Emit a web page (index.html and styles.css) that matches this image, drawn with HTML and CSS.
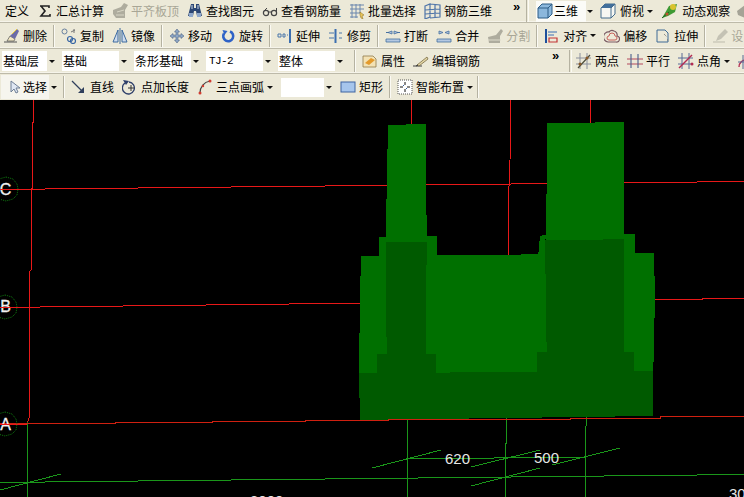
FILE: index.html
```html
<!DOCTYPE html>
<html lang="zh">
<head>
<meta charset="utf-8">
<title>三维</title>
<link rel="stylesheet" href="styles.css">
</head>
<body>
<div class="app">
  <div class="row row1">
    <div class="tool"><span>定义</span></div>
    <div class="tool"><svg class="ic" viewBox="0 0 16 16"><path d="M3 3h9v2M4 3l4 5-4 5h9v-2" fill="none" stroke="#222" stroke-width="1.6"/></svg><span>汇总计算</span></div>
    <div class="tool off"><svg class="ic" viewBox="0 0 16 16"><path d="M1 7l8-3 3-4 4 2-3 5v8H4l-3-4z" fill="#aeac9e"/><path d="M5 9l7-2M4 12h8" stroke="#d8d6c6"/></svg><span>平齐板顶</span></div>
    <div class="tool"><svg class="ic" viewBox="0 0 16 16"><path d="M4 1h3v4h2V1h3l3 12h-5l-1-5H7l-1 5H1z" fill="#2c4673"/><path d="M2 10h4v4H2zM10 10h4v4h-4z" fill="#8fa8cc"/><path d="M5 2v4M11 2v4" stroke="#c9d6ea"/></svg><span>查找图元</span></div>
    <div class="tool"><svg class="ic" viewBox="0 0 16 16"><circle cx="4" cy="10" r="2.6" fill="none" stroke="#444" stroke-width="1.2"/><circle cx="12" cy="10" r="2.6" fill="none" stroke="#444" stroke-width="1.2"/><path d="M6.500 9h3M2 8l3-3M14.500 9V5" fill="none" stroke="#444"/></svg><span>查看钢筋量</span></div>
    <div class="tool"><svg class="ic" viewBox="0 0 16 16"><path d="M1 2h14M1 6h14M1 10h10M1 14h8M3 1v14M7 1v14M11 1v9" stroke="#6a86ad" fill="none"/><path d="M11 9l4 3-2 1 1 3-2-1-1-3z" fill="#e8c45a" stroke="#8b6d1c" stroke-width=".5"/></svg><span>批量选择</span></div>
    <div class="tool wide"><svg class="ic" viewBox="0 0 17 16"><path d="M1 3l5-2v13l-5 2zM1 7l15-1M1 11l15-1M6 1l10 1v12l-10 1M11 2v12M16 2v12" fill="none" stroke="#4f75a8" stroke-width="1.200"/></svg><span>钢筋三维</span></div>
    <div class="chev top1">»</div>
    <div class="sep dbl"></div>
    <div class="view">
      <div class="viewbox"><svg class="ic" viewBox="0 0 16 16"><path d="M1 5l4-4h10v10l-4 4H1z" fill="#8bb7dc" stroke="#2c5d86"/><path d="M1 5h10v10M11 5l4-4" fill="none" stroke="#2c5d86"/></svg><span>三维</span></div>
      <i class="arr"></i>
    </div>
    <div class="tool arrowed wide2"><svg class="ic" viewBox="0 0 18 16"><path d="M2 5l4-4h10v10l-4 4H2z" fill="#f7f7f2" stroke="#456c8d"/><path d="M2 5l4-4h10l-4 4z" fill="#426f9b"/><path d="M12 5v10M12 5l4-4" stroke="#456c8d"/></svg><span>俯视</span><i class="arr"></i></div>
    <div class="tool wide3"><svg class="ic" viewBox="0 0 18 16"><path d="M1 15l3-5 4-7 8-2-2 8-7 4z" fill="#3e9a33"/><circle cx="12" cy="4" r="3" fill="#d9c32f"/><path d="M1 15l7-6" stroke="#1c5c20"/><circle cx="6" cy="11" r="1.500" fill="#c14f2e"/></svg><span>动态观察</span></div>
    <div class="tool off last"><svg class="ic" viewBox="0 0 16 16"><path d="M1 8l8-6 6 3-6 10-7-3z" fill="#a5a396"/></svg></div>
  </div>

  <div class="row row2">
    <div class="tool"><svg class="ic" viewBox="0 0 16 16"><path d="M0 14h13" stroke="#555"/><path d="M3 13l3-5 5 3-1 2z" fill="#f2e7c2" stroke="#555" stroke-width=".7"/><path d="M6 8l7-7 2 2-4 8z" fill="#6c6ca8"/><path d="M8 6l5-5" stroke="#e7c93c"/></svg><span>删除</span></div>
    <div class="sep"></div>
    <div class="tool"><svg class="ic" viewBox="0 0 16 16"><circle cx="3.500" cy="3.500" r="2.500" fill="none" stroke="#68809f"/><circle cx="9" cy="11" r="2.500" fill="none" stroke="#3765a4" stroke-width="1.200"/><circle cx="12" cy="13" r="2.500" fill="none" stroke="#3765a4" stroke-width="1.200"/><path d="M10 4l4-2M13 1v4" stroke="#777" fill="none"/></svg><span>复制</span></div>
    <div class="tool"><svg class="ic" viewBox="0 0 16 16"><path d="M6 2v12H1z" fill="#cfdced" stroke="#3d6a9e"/><path d="M10 2v12h5z" fill="#cfdced" stroke="#3d6a9e"/><path d="M8 0v16" stroke="#3d6a9e"/></svg><span>镜像</span></div>
    <div class="sep"></div>
    <div class="tool"><svg class="ic" viewBox="0 0 16 16"><path d="M8 1l2.500 3H9v3h3V5.500L15 8l-3 2.500V9H9v3h1.500L8 15l-2.500-3H7V9H4v1.500L1 8l3-2.500V7h3V4H5.500z" fill="#8ea6c4" stroke="#3c5578" stroke-width=".5"/></svg><span>移动</span></div>
    <div class="tool"><svg class="ic" viewBox="0 0 16 16"><path d="M10 3.500A5 5 0 1 1 4 5.500" fill="none" stroke="#2e62c7" stroke-width="2.600"/><path d="M2.500 2l5 1-3 4z" fill="#2e62c7"/></svg><span>旋转</span></div>
    <div class="sep"></div>
    <div class="tool"><svg class="ic" viewBox="0 0 16 16"><path d="M1 6h3v3H1zM6 6h2v3H6zM10 7h1" fill="none" stroke="#4a77aa"/><path d="M13 1v14" stroke="#3d6fb0" stroke-width="2"/></svg><span>延伸</span></div>
    <div class="tool"><svg class="ic" viewBox="0 0 16 16"><path d="M1 5h5M1 10h5M11 5h3M11 10h3" stroke="#4a77aa"/><path d="M7.500 1v14" stroke="#3d6fb0" stroke-width="2"/></svg><span>修剪</span></div>
    <div class="sep"></div>
    <div class="tool"><svg class="ic" viewBox="0 0 16 16"><path d="M1 11h14v3H1zM7 3l-4 1.500L7 6zM9 3l4 1.500L9 6z" fill="#b4c8e2" stroke="#456f9f" stroke-width=".8"/><path d="M1 4.500h3M12 4.500h3" stroke="#456f9f"/></svg><span>打断</span></div>
    <div class="tool"><svg class="ic" viewBox="0 0 16 16"><path d="M1 11h14v3H1zM3 3l4 1.500L3 6zM13 3L9 4.500 13 6z" fill="#b4c8e2" stroke="#456f9f" stroke-width=".8"/></svg><span>合并</span></div>
    <div class="tool off"><svg class="ic" viewBox="0 0 16 16"><path d="M1 9l8-2 5-6 2 2-3 5v7H2z" fill="#aeac9e"/><path d="M1 12h13" stroke="#dedccc"/></svg><span>分割</span></div>
    <div class="sep"></div>
    <div class="tool arrowed"><svg class="ic" viewBox="0 0 16 16"><path d="M2 1v14" stroke="#1e4f9c" stroke-width="2"/><path d="M4 4h9M4 7h6" stroke="#3a6eb5"/><path d="M5 10h8v4H5z" fill="none" stroke="#c23434" stroke-width="1.200"/></svg><span>对齐</span><i class="arr"></i></div>
    <div class="tool"><svg class="ic" viewBox="0 0 16 16"><path d="M4 14h8a3 3 0 0 0 1-6 4 4 0 0 0-3-5 4 4 0 0 0-5 1 4 4 0 0 0-1 10z" fill="none" stroke="#7a5a63" stroke-width="1.200"/><path d="M5 12h6a2 2 0 0 0 0-4 3 3 0 0 0-6 0 2 2 0 0 0 0 4z" fill="none" stroke="#c7605a"/></svg><span>偏移</span></div>
    <div class="tool"><svg class="ic" viewBox="0 0 16 16"><path d="M2 2h8l3 3v9H2z" fill="none" stroke="#3f6b96"/><path d="M9 6l3 3M12 12h2" stroke="#6b6b6b" stroke-dasharray="1 1"/></svg><span>拉伸</span></div>
    <div class="sep"></div>
    <div class="tool off"><svg class="ic" viewBox="0 0 16 16"><path d="M1 14h12" stroke="#bdbbac"/><path d="M4 13l2-5 7-7 3 3-7 7z" fill="#c4c2b4"/></svg><span>设</span></div>
  </div>

  <div class="row row3">
    <div class="combo short"><span>基础层</span><i class="arr"></i></div>
    <div class="combo"><span>基础</span><i class="arr"></i></div>
    <div class="combo"><span>条形基础</span><i class="arr"></i></div>
    <div class="combo"><span class="mono">TJ-2</span><i class="arr"></i></div>
    <div class="combo"><span>整体</span><i class="arr"></i></div>
    <div class="sep first"></div>
    <div class="tool"><svg class="ic" viewBox="0 0 16 16"><path d="M1 3h10l3 3v8H1z" fill="#f3e2b4" stroke="#8f7a4a" stroke-width=".8"/><path d="M3 10l6-5 4 2-6 5z" fill="#e39a2c"/></svg><span>属性</span></div>
    <div class="tool"><svg class="ic" viewBox="0 0 16 16"><path d="M0 13h9" stroke="#444"/><path d="M4 12l10-8 1 2-9 7z" fill="#e3d6a6" stroke="#6b5d35" stroke-width=".7"/><path d="M3 13l2-1" stroke="#333"/></svg><span>编辑钢筋</span></div>
    <div class="chev far">»</div>
    <div class="sep dbl"></div>
    <div class="tool"><svg class="ic" viewBox="0 0 16 16"><path d="M0 5h15M0 11h15M4 0v16M11 0v16" stroke="#8a8f9c"/><path d="M2 15L14 2" stroke="#4c4c3a" stroke-width="1.200"/><circle cx="4" cy="11" r="1.500" fill="#8a5a2a"/><circle cx="11" cy="5" r="1.500" fill="#8a5a2a"/></svg><span>两点</span></div>
    <div class="tool"><svg class="ic" viewBox="0 0 16 16"><path d="M0 6h16M0 11h16" stroke="#b44a5c" stroke-width="1.100"/><path d="M4 1v14M11 1v14" stroke="#4a5f8c" stroke-width="1.100"/></svg><span>平行</span></div>
    <div class="tool arrowed"><svg class="ic" viewBox="0 0 16 16"><path d="M0 5h15M0 11h15M4 0v16M11 0v16" stroke="#586b96"/><path d="M1 15L14 2" stroke="#b32b52" stroke-width="1.400"/><circle cx="14" cy="11" r="1.500" fill="#b32b52"/></svg><span>点角</span><i class="arr"></i></div>
    <div class="tool"><svg class="ic" viewBox="0 0 16 16"><path d="M1 14A7 7 0 0 1 15 14" fill="none" stroke="#b32b52" stroke-width="1.400"/><path d="M0 9h16M5 2v14" stroke="#586b96"/></svg></div>
  </div>

  <div class="row row4">
    <div class="tool pressed"><svg class="ic small" viewBox="0 0 14 16"><path d="M4 2v11l3-3 2 4 2-1-2-4h4z" fill="#dfe7f3" stroke="#6f7f96"/></svg><span>选择</span></div>
    <i class="arr solo"></i>
    <div class="sep solo"></div>
    <div class="tool"><svg class="ic" viewBox="0 0 16 16"><path d="M1 2l11 11" stroke="#2f3f5c" stroke-width="1.300"/><path d="M13 8v6H7z" fill="#2f3f5c"/></svg><span>直线</span></div>
    <div class="tool"><svg class="ic" viewBox="0 0 16 16"><path d="M3 4a6 6 0 1 0 4-1" fill="none" stroke="#2e3f6a" stroke-width="1.300"/><path d="M1 1l6 1-3 4z" fill="#2e3f6a"/><path d="M9 6v6M6 9h6" stroke="#333"/></svg><span>点加长度</span></div>
    <div class="tool arrowed"><svg class="ic" viewBox="0 0 16 16"><path d="M3 14C3 8 7 3 13 2" fill="none" stroke="#444" stroke-width="1.200"/><circle cx="3" cy="14" r="1.500" fill="#d23b30"/><circle cx="13" cy="2" r="1.500" fill="#d23b30"/><circle cx="6" cy="7" r="1.200" fill="#d23b30"/></svg><span>三点画弧</span><i class="arr"></i></div>
    <div class="combo blank"><i class="arr"></i></div>
    <div class="tool tight"><svg class="ic" viewBox="0 0 16 16"><rect x="1" y="3" width="14" height="10" fill="#a6c5ec" stroke="#3e65a2"/></svg><span>矩形</span></div>
    <div class="sep"></div>
    <div class="tool arrowed"><svg class="ic" viewBox="0 0 16 16"><rect x="1" y="1" width="14" height="14" fill="#fff" stroke="#555" stroke-dasharray="1 1"/><path d="M8 3v3M8 10v3M3 8h3M10 8h3" stroke="#111"/><path d="M6 6h1v1H6zM9 9h1v1H9z" fill="#2f5fa8"/></svg><span>智能布置</span><i class="arr"></i></div>
    <div class="sep end"></div>
  </div>

  <svg class="canvas" viewBox="0 100 744 397">
    <g class="grid-red">
      <polyline points="33,100 33,122 32,122 32,188 31,188 31,270 29,272 29,418 27,424"/>
      <line x1="411.500" y1="100" x2="411.500" y2="126"/>
      <polyline points="511,100 510,160 508.500,200 508.500,256"/>
      <line x1="590.500" y1="100" x2="590.500" y2="124"/>
      <line x1="0" y1="189.500" x2="744" y2="181.500"/>
      <line x1="0" y1="307.500" x2="744" y2="298.500"/>
    </g>
    <g class="grid-green">
      <line x1="27.500" y1="422" x2="27.500" y2="497"/>
      <line x1="407.500" y1="418" x2="407.500" y2="497"/>
      <polyline points="506.500,418 506.500,443 505.500,443 505.500,497"/>
      <polyline points="586.500,417 585.500,435 585.500,497"/>
      <line x1="0" y1="482.500" x2="744" y2="474.500"/>
      <line x1="407" y1="458.500" x2="585" y2="457.500"/>
      <line x1="372" y1="468" x2="441" y2="450"/>
      <line x1="471" y1="467" x2="540" y2="450"/>
      <line x1="552" y1="465" x2="620" y2="448"/>
      <line x1="471" y1="486" x2="540" y2="468"/>
      <line x1="0" y1="490" x2="61" y2="474"/>
    </g>
    <g class="solid" transform="translate(340 110) scale(.33333)">
      <g class="lite">
        <polygon points="144,45 258,42 260,395 137,395"/>
        <polygon points="622,40 852,36 852,390 618,390"/>
        <polygon points="63,438 117,438 117,381 137,381 137,395 140,732 110,732 110,790 57,790 60,560"/>
        <polygon points="260,378 290,378 290,436 595,433 600,377 622,375 615,390 620,725 592,725 590,787 288,790 288,732 258,732"/>
        <polygon points="852,373 885,373 885,430 942,430 945,560 940,782 882,785 882,725 852,725"/>
      </g>
      <g class="dark">
        <polygon points="137,395 260,395 258,732 288,732 288,790 110,790 110,732 140,732"/>
        <polygon points="615,390 852,388 852,725 882,725 882,785 590,790 592,725 620,725"/>
        <polygon points="57,790 940,782 938,918 60,930"/>
      </g>
    </g>
    <polyline class="grid-base" points="0,424 28,423 115,423 115,422 212,422 212,421 305,421 305,420 388,420 388,419 570,419 570,418 660,418 660,417 744,416"/>
    <g class="axis">
      <polygon points="6,177 13,179 17,184 18,189 17,195 13,199 6,201 -1,199 -5,195 -6,189 -5,184 -1,179"/>
      <polygon points="5,295 12,297 16,302 17,307 16,313 12,317 5,319 -2,317 -6,313 -7,307 -6,302 -2,297"/>
      <polygon points="5,412 12,414 16,419 17,424 16,430 12,434 5,436 -2,434 -6,430 -7,424 -6,419 -2,414"/>
    </g>
    <g class="letters">
      <text x="5.500" y="195">C</text>
      <text x="5.500" y="312">B</text>
      <text x="5.500" y="430">A</text>
    </g>
    <g class="red-tail">
      <line x1="0" y1="189.500" x2="30" y2="189.500"/>
      <line x1="0" y1="307.500" x2="30" y2="307.500"/>
      <line x1="0" y1="424.500" x2="27" y2="424.500"/>
    </g>
    <g class="dims">
      <text x="445" y="464">620</text>
      <text x="534" y="463">500</text>
      <text x="250" y="506">3000</text>
      <text x="729" y="499">30</text>
    </g>
  </svg>
</div>
</body>
</html>
```
FILE: styles.css
```css
* { box-sizing: border-box; }
html, body { margin: 0; padding: 0; height: 100%; background: #000; overflow: hidden; }
.app {
  width: 744px;
  height: 497px;
  display: flex;
  flex-direction: column;
  overflow: hidden;
  font: 12px/14px "Noto Sans CJK SC", "Liberation Sans", sans-serif;
  color: #000;
}
.row {
  display: flex;
  align-items: center;
  flex: none;
  background: #ece9d8;
  border-bottom: 1px solid #bdbaa9;
  box-shadow: inset 0 -1px 0 #f6f4ea;
  overflow: hidden;
  white-space: nowrap;
}
.row1 { height: 23px; padding-left: 1px; }
.row2 { height: 26px; }
.row3 { height: 25px; padding-left: 2px; }
.row4 { height: 26px; padding-left: 1px; border-bottom: 0; box-shadow: none; }

.tool { display: flex; align-items: center; gap: 3px; padding: 0 4px; flex: none; }
.tool.off { color: #a8a696; }
.tool.tight { padding: 0 4px 0 3px; margin-left: 2px; }
.tool.wide .ic { width: 17px; }
.tool.wide2 .ic, .tool.wide3 .ic { width: 18px; }
.tool.wide2 { margin-left: 2px; }
.tool.last { margin-left: -2px; }
.tool.pressed { background: #f6f5ee; height: 24px; padding: 0 2px 0 6px; gap: 2px; }

.ic { width: 16px; height: 16px; flex: none; display: block; }
.ic.small { width: 14px; }

.arr {
  display: block;
  flex: none;
  width: 0;
  height: 0;
  border-left: 3px solid transparent;
  border-right: 3px solid transparent;
  border-top: 3px solid #111;
}
.arr.solo { margin-left: 2px; }

.sep {
  flex: none;
  width: 2px;
  height: 22px;
  margin: 0 2px;
  border-left: 1px solid #b5b2a1;
  border-right: 1px solid #fbfaf4;
}
.sep.first { margin: 0 2px 0 4px; }
.sep.solo { margin: 0 2px 0 6px; }
.sep.dbl { margin: 0; width: 3px; }
.sep.end { margin: 0; }

.chev {
  flex: none;
  width: 10px;
  font: bold 13px/12px "Liberation Sans", sans-serif;
  align-self: flex-start;
  margin-top: 1px;
}
.chev.top1 { margin-left: 17px; margin-right: 3px; }
.chev.far { margin-left: 68px; margin-right: 7px; }

.view { display: flex; align-items: center; flex: none; margin-left: 7px; gap: 1px; }
.viewbox { display: flex; align-items: center; gap: 1px; width: 50px; height: 21px; background: #fbfbf7; padding-left: 1px; }

.combo {
  display: flex;
  align-items: center;
  justify-content: space-between;
  flex: none;
  width: 68px;
  height: 20px;
  margin-right: 4px;
  padding: 0 3px 0 1px;
  background: linear-gradient(to right, #fff calc(100% - 11px), #ece9d8 calc(100% - 11px));
}
.combo.short { width: 56px; }
.combo.blank { width: 54px; margin: 0 0 0 4px; height: 19px; justify-content: flex-end; }
.mono { font: 11px/14px "Liberation Mono", monospace; letter-spacing: -.6px; padding-left: 2px; }

.canvas { display: block; flex: none; width: 744px; height: 397px; background: #000; }
.grid-red, .grid-green, .grid-base, .red-tail { fill: none; shape-rendering: crispEdges; }
.grid-red, .red-tail { stroke: #e81818; }
.grid-base { stroke: #d02010; }
.grid-green { stroke: #1a961a; }
.solid { shape-rendering: crispEdges; }
.lite { fill: #007000; }
.dark { fill: #005a00; }
.axis { fill: none; stroke: #0f7a0f; stroke-dasharray: 1 1; }
.letters text { fill: #f0f0f0; stroke: #f0f0f0; stroke-width: .3; font: 16px "Liberation Sans", sans-serif; text-anchor: middle; }
.dims text { fill: #e6e6e6; font: 15px "Liberation Sans", sans-serif; }
```
